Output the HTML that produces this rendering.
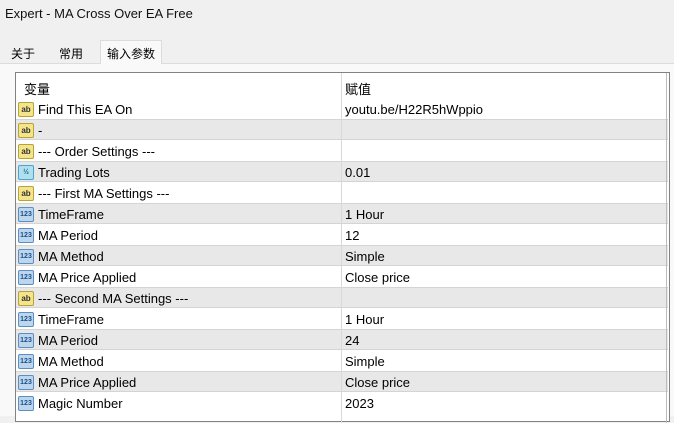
<!DOCTYPE html>
<html><head><meta charset="utf-8"><style>
*{margin:0;padding:0;box-sizing:border-box}
body{width:674px;height:416px;overflow:hidden;background:#f0f0f0;font-family:"Liberation Sans","Noto Sans CJK SC",sans-serif;font-size:13px;color:#000;position:relative}
.title{position:absolute;left:5px;top:6px;font-size:13px;color:#111}
.tab{position:absolute;top:42px;height:21px;font-size:12px;padding-top:3px}
.panel{position:absolute;left:0;top:63px;width:674px;height:353px;background:#f9f9f9;border-top:1px solid #dcdcdc}
.activetab{position:absolute;left:100px;top:40px;width:62px;height:24px;background:#f9f9f9;border:1px solid #dcdcdc;border-bottom:none}
.table{position:absolute;left:15px;top:72px;width:655px;height:350px;background:#fff;border:1px solid #828282}
.sb{position:absolute;right:2px;top:0;width:1px;height:350px;background:#bbb}
.hdr{position:absolute;top:0;left:0;height:26px;width:652px}
.row{position:absolute;left:0;width:652px;height:21px}
.g{background:#e8e8e8;border-top:1px solid #d4d4d4;border-bottom:1px solid #d4d4d4}
.n{position:absolute;left:22px;top:3px;white-space:nowrap}
.v{position:absolute;left:329px;top:3px;white-space:nowrap}
.div{position:absolute;left:325px;top:0;width:1px;height:350px;background:#d8d8d8}
.ic{position:absolute;left:2px;top:3px;width:16px;height:15px;border-radius:2px;font-size:8px;font-weight:bold;text-align:center;line-height:14px}
.ab{background:#f4e48a;border:1px solid #b8a23a;color:#333}
.n3{background:#bcd6ee;border:1px solid #5b8fc2;color:#1b4f8a;font-size:7px}
.fr{background:#aee0f0;border:1px solid #4aa4c8;color:#1b5f8a;font-size:7px}
</style></head><body>
<div class="title">Expert - MA Cross Over EA Free</div>
<div class="panel"></div>
<div class="activetab"></div>
<div class="tab" style="left:11px">关于</div>
<div class="tab" style="left:59px">常用</div>
<div class="tab" style="left:107px">输入参数</div>
<div class="table">
<div class="hdr"><span class="n" style="left:8px;top:6px">变量</span><span class="v" style="top:6px">赋值</span></div>
<div class="row" style="top:26px"><div class="ic ab">ab</div><span class="n">Find This EA On</span><span class="v">youtu.be/H22R5hWppio</span></div>
<div class="row g" style="top:46px"><div class="ic ab">ab</div><span class="n">-</span></div>
<div class="row" style="top:68px"><div class="ic ab">ab</div><span class="n">--- Order Settings ---</span></div>
<div class="row g" style="top:88px"><div class="ic fr">½</div><span class="n">Trading Lots</span><span class="v">0.01</span></div>
<div class="row" style="top:110px"><div class="ic ab">ab</div><span class="n">--- First MA Settings ---</span></div>
<div class="row g" style="top:130px"><div class="ic n3">123</div><span class="n">TimeFrame</span><span class="v">1 Hour</span></div>
<div class="row" style="top:152px"><div class="ic n3">123</div><span class="n">MA Period</span><span class="v">12</span></div>
<div class="row g" style="top:172px"><div class="ic n3">123</div><span class="n">MA Method</span><span class="v">Simple</span></div>
<div class="row" style="top:194px"><div class="ic n3">123</div><span class="n">MA Price Applied</span><span class="v">Close price</span></div>
<div class="row g" style="top:214px"><div class="ic ab">ab</div><span class="n">--- Second MA Settings ---</span></div>
<div class="row" style="top:236px"><div class="ic n3">123</div><span class="n">TimeFrame</span><span class="v">1 Hour</span></div>
<div class="row g" style="top:256px"><div class="ic n3">123</div><span class="n">MA Period</span><span class="v">24</span></div>
<div class="row" style="top:278px"><div class="ic n3">123</div><span class="n">MA Method</span><span class="v">Simple</span></div>
<div class="row g" style="top:298px"><div class="ic n3">123</div><span class="n">MA Price Applied</span><span class="v">Close price</span></div>
<div class="row" style="top:320px"><div class="ic n3">123</div><span class="n">Magic Number</span><span class="v">2023</span></div>
<div class="div"></div>
<div class="sb"></div>
</div>
</body></html>
